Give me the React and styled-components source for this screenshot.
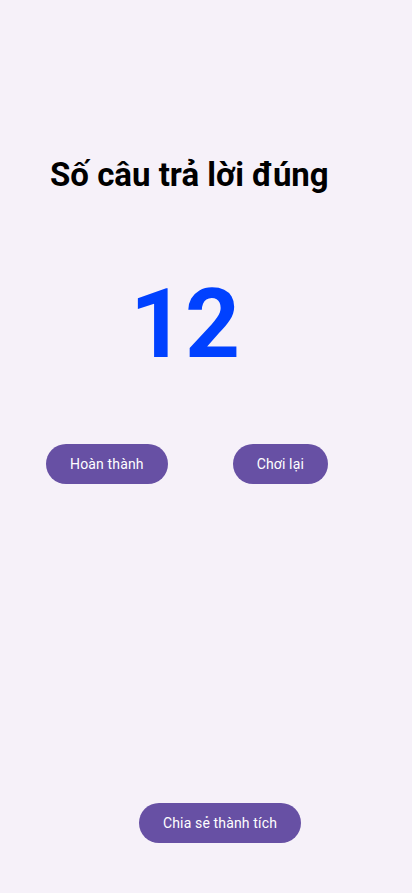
import React from 'react'
import styled, { createGlobalStyle } from 'styled-components'

const GlobalStyle = createGlobalStyle`
  html, body { margin: 0; padding: 0; background: #f6f1f9; }
  body { font-family: Roboto, "Noto Sans", sans-serif; }
`

const Screen = styled.div`
  width: 412px;
  height: 893px;
  background: #f6f1f9;
  display: flex;
  flex-direction: column;
  box-sizing: border-box;
  padding-top: 155px;
  overflow: hidden;
`

const Title = styled.h1`
  margin: 0 0 0 50px;
  font-size: 33px;
  line-height: 39px;
  font-weight: 700;
  color: #000;
`

const Score = styled.div`
  margin: 82px 0 0 130px;
  font-size: 96px;
  line-height: 96px;
  font-weight: 700;
  color: #0041ff;
`

const ButtonRow = styled.div`
  display: flex;
  gap: 65px;
  margin: 72px 0 0 46px;
`

const Pill = styled.button`
  height: 40px;
  padding: 0 24px;
  border: none;
  border-radius: 20px;
  background: #6750a4;
  color: #fff;
  font-family: Roboto, sans-serif;
  font-size: 14px;
  font-weight: 400;
  letter-spacing: 0.15px;
  cursor: pointer;
`

const Footer = styled.div`
  display: flex;
  justify-content: center;
  margin-top: auto;
  margin-bottom: 50px;
  padding-left: 28px;
`

export default function App() {
  return (
    <>
      <GlobalStyle />
      <Screen>
        <Title>Số câu trả lời đúng</Title>
        <Score>12</Score>
        <ButtonRow>
          <Pill>Hoàn thành</Pill>
          <Pill>Chơi lại</Pill>
        </ButtonRow>
        <Footer>
          <Pill>Chia sẻ thành tích</Pill>
        </Footer>
      </Screen>
    </>
  )
}
